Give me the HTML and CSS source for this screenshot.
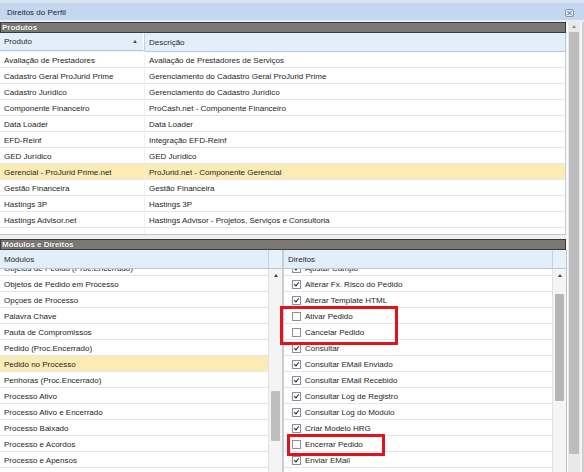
FILE: index.html
```html
<!DOCTYPE html>
<html lang="pt-BR">
<head>
    <meta charset="UTF-8">
    <title>Direitos do Perfil</title>
    <link rel="stylesheet" href="styles.css">
</head>
<body>
    <div class="titlebar">
        <span>Direitos do Perfil</span>
        <svg class="close" width="9" height="8" viewBox="0 0 9 8">
            <rect x="0.5" y="0.5" width="8" height="7" rx="1.5" fill="#dfe8f3" stroke="#8a96a6"/>
            <path d="M2.5 2l4 4M6.5 2l-4 4" stroke="#5d6878" stroke-width="1"/>
        </svg>
    </div>

    <div class="frame">
        <div class="content">
            <!-- Produtos -->
            <div class="section-title">Produtos</div>
            <div class="grid-head">
                <div class="head-cell col-prod">Produto <span class="sort"></span></div>
                <div class="head-cell">Descrição</div>
            </div>
            <div class="grid-body">
                <div class="row"><div class="col-prod">Avaliação de Prestadores</div><div class="cell">Avaliação de Prestadores de Serviços</div></div>
                <div class="row"><div class="col-prod">Cadastro Geral ProJurid Prime</div><div class="cell">Gerenciamento do Cadastro Geral ProJurid Prime</div></div>
                <div class="row"><div class="col-prod">Cadastro Jurídico</div><div class="cell">Gerenciamento do Cadastro Jurídico</div></div>
                <div class="row"><div class="col-prod">Componente Financeiro</div><div class="cell">ProCash.net - Componente Financeiro</div></div>
                <div class="row"><div class="col-prod">Data Loader</div><div class="cell">Data Loader</div></div>
                <div class="row"><div class="col-prod">EFD-Reinf</div><div class="cell">Integração EFD-Reinf</div></div>
                <div class="row"><div class="col-prod">GED Jurídico</div><div class="cell">GED Jurídico</div></div>
                <div class="row selected"><div class="col-prod">Gerencial - ProJurid Prime.net</div><div class="cell">ProJurid.net - Componente Gerencial</div></div>
                <div class="row"><div class="col-prod">Gestão Financeira</div><div class="cell">Gestão Financeira</div></div>
                <div class="row"><div class="col-prod">Hastings 3P</div><div class="cell">Hastings 3P</div></div>
                <div class="row"><div class="col-prod">Hastings Advisor.net</div><div class="cell">Hastings Advisor - Projetos, Serviços e Consultoria</div></div>
                <div class="row"><div class="col-prod">Hastings Mail Tracking</div><div class="cell">Hastings Mail Tracking - Controle de E-mail</div></div>
            </div>

            <!-- Módulos e Direitos -->
            <div class="section-title second">Módulos e Direitos</div>
            <div class="split">
                <div class="pane modules">
                    <div class="pane-head">
                        <div class="head-cell">Módulos</div>
                        <div class="head-corner"></div>
                    </div>
                    <div class="pane-main">
                        <div class="list">
                            <div class="scrolled">
                                <div class="row">Objetos de Pedido (Proc.Encerrado)</div>
                                <div class="row">Objetos de Pedido em Processo</div>
                                <div class="row">Opçoes de Processo</div>
                                <div class="row">Palavra Chave</div>
                                <div class="row">Pauta de Compromissos</div>
                                <div class="row">Pedido (Proc.Encerrado)</div>
                                <div class="row selected">Pedido no Processo</div>
                                <div class="row">Penhoras (Proc.Encerrado)</div>
                                <div class="row">Processo Ativo</div>
                                <div class="row">Processo Ativo e Encerrado</div>
                                <div class="row">Processo Baixado</div>
                                <div class="row">Processo e Acordos</div>
                                <div class="row">Processo e Apensos</div>
                                <div class="row">Processo e Incidentes</div>
                            </div>
                        </div>
                        <div class="vscroll">
                            <div class="arrow"></div>
                            <div class="thumb thumb-modules"></div>
                        </div>
                    </div>
                </div>

                <div class="pane rights">
                    <div class="pane-head">
                        <div class="head-cell">Direitos</div>
                        <div class="head-corner"></div>
                    </div>
                    <div class="pane-main">
                        <div class="list">
                            <div class="scrolled">
                                <div class="row"><span class="cb on"></span>Ajustar Campo</div>
                                <div class="row"><span class="cb on"></span>Alterar Fx. Risco do Pedido</div>
                                <div class="row"><span class="cb on"></span>Alterar Template HTML</div>
                                <div class="row"><span class="cb"></span>Ativar Pedido</div>
                                <div class="row"><span class="cb"></span>Cancelar Pedido</div>
                                <div class="row"><span class="cb on"></span>Consultar</div>
                                <div class="row"><span class="cb on"></span>Consultar EMail Enviado</div>
                                <div class="row"><span class="cb on"></span>Consultar EMail Recebido</div>
                                <div class="row"><span class="cb on"></span>Consultar Log de Registro</div>
                                <div class="row"><span class="cb on"></span>Consultar Log do Módulo</div>
                                <div class="row"><span class="cb on"></span>Criar Modelo HRG</div>
                                <div class="row"><span class="cb"></span>Encerrar Pedido</div>
                                <div class="row"><span class="cb on"></span>Enviar EMail</div>
                                <div class="row"><span class="cb on"></span>Excluir</div>
                            </div>
                        </div>
                        <div class="vscroll">
                            <div class="arrow"></div>
                            <div class="thumb thumb-rights"></div>
                        </div>
                    </div>
                </div>

                <!-- destaques -->
                <div class="mark mark-1"></div>
                <div class="mark mark-2"></div>
            </div>
        </div>

        <div class="outer-scroll">
            <div class="arrow"></div>
            <div class="outer-thumb"></div>
        </div>
        <div class="outer-edge"></div>
    </div>
</body>
</html>
```

FILE: styles.css
```css
body {
    margin: 0;
    width: 584px;
    height: 472px;
    overflow: hidden;
    font-family: "Liberation Sans", Arial, sans-serif;
    font-size: 8px;
    color: #1e1e1e;
    background-color: #f0f0f0;
}

/* Title bar */
.titlebar {
    height: 15px;
    padding: 2px 10px 0 7px;
    border-top: 3px solid #d8e4f2;
    border-bottom: 2px solid #e6edf6;
    background-color: #c4d7ee;
    display: flex;
    align-items: center;
    justify-content: space-between;
    color: #1c2838;
}

.close {
    display: block;
}

.frame {
    display: flex;
    height: 450px;
}

.content {
    width: 567px;
    display: flex;
    flex-direction: column;
}

/* Section headers */
.section-title {
    height: 9px;
    line-height: 10px;
    margin-right: 1px;
    padding-left: 1px;
    background-color: #7b7773;
    border: 1px solid #3c3c3c;
    color: #ffffff;
    font-weight: bold;
    text-shadow: 0 0 1px #2e2e2e;
}

.section-title.second {
    margin-top: 4px;
}

.head-cell {
    height: 18px;
    line-height: 19px;
    padding-left: 4px;
    background-color: #e3eefb;
    border-bottom: 1px solid #b8c8dc;
    color: #2a2a2a;
    flex: 1;
}

/* Produtos grid */
.grid-head {
    display: flex;
    margin-right: 1px;
    border-right: 1px solid #b8c8dc;
}

.grid-head .col-prod {
    flex: none;
    display: flex;
    align-items: center;
    box-sizing: border-box;
    border-right: 1px solid #c2d1e3;
    box-shadow: inset -1px 0 0 #ffffff;
    padding-right: 7px;
}

.sort {
    margin-left: auto;
    width: 0;
    height: 0;
    border-left: 2px solid transparent;
    border-right: 2px solid transparent;
    border-bottom: 3px solid #4c4c4c;
}

.col-prod {
    width: 145px;
    box-sizing: border-box;
}

.grid-body {
    height: 182px;
    overflow: hidden;
    background-color: #ffffff;
    margin-right: 1px;
    border-right: 1px solid #c8d2de;
    border-bottom: 1px solid #c4c4c4;
}

.row {
    height: 13px;
    padding-top: 2px;
    line-height: 13px;
    border-bottom: 1px solid #e3e5e9;
    display: flex;
    align-items: center;
    white-space: nowrap;
}

.grid-body .col-prod {
    padding-left: 4px;
    border-right: 1px solid #edf0f4;
    align-self: stretch;
}

.grid-body .cell {
    padding-left: 4px;
}

.row.selected {
    background-color: #fbecb6;
}

/* Módulos e Direitos */
.split {
    position: relative;
    display: flex;
    flex: 1;
    min-height: 0;
}

.pane {
    display: flex;
    flex-direction: column;
}

.pane.modules {
    width: 282px;
    border-right: 2px solid #c9ced6;
}

.pane.rights {
    width: 282px;
    border-right: 1px solid #b9c2cd;
}

.pane-head {
    display: flex;
}

.head-corner {
    width: 13px;
    height: 18px;
    background-color: #e8f0fa;
    border-bottom: 1px solid #b8c8dc;
    border-left: 1px solid #c2d1e3;
}

.pane-main {
    flex: 1;
    display: flex;
    min-height: 0;
}

.list {
    flex: 1;
    overflow: hidden;
    background-color: #ffffff;
}

.scrolled {
    margin-top: -9px;
}

.modules .row {
    padding-left: 4px;
}

.rights .row {
    padding-left: 8px;
}

.cb {
    position: relative;
    width: 9px;
    height: 9px;
    box-sizing: border-box;
    border: 1px solid #8b9198;
    background-color: #ffffff;
    margin-right: 4px;
    flex: none;
}

.cb.on::after {
    content: "";
    position: absolute;
    left: 2px;
    top: 0;
    width: 2px;
    height: 4px;
    border: solid #1f2a36;
    border-width: 0 1.5px 1.5px 0;
    transform: rotate(40deg);
}

.vscroll {
    width: 13px;
    background-color: #f4f4f4;
    border-left: 1px solid #e2e2e2;
    display: flex;
    flex-direction: column;
    align-items: center;
}

.arrow {
    margin-top: 5px;
    width: 0;
    height: 0;
    border-left: 2px solid transparent;
    border-right: 2px solid transparent;
    border-bottom: 3px solid #444444;
    flex: none;
}

.thumb {
    width: 9px;
    background-color: #bebebe;
    border-radius: 1px;
}

.thumb-modules {
    margin-top: 114px;
    height: 50px;
}

.thumb-rights {
    margin-top: 17px;
    height: 107px;
    background-color: #b6b6b6;
}

/* Outer scrollbar */
.outer-scroll {
    width: 12px;
    background-color: #e9e9e9;
    border-left: 1px solid #ffffff;
    display: flex;
    flex-direction: column;
    align-items: center;
}

.outer-scroll .arrow {
    margin-top: 3px;
    border-bottom-color: #8a8a8a;
}

.outer-thumb {
    margin-top: 4px;
    width: 10px;
    height: 422px;
    background-color: #bdbdbd;
}

.outer-edge {
    flex: 1;
    background-color: #e2e2e2;
    border-left: 2px solid #f4f4f4;
    box-shadow: inset -2px 0 0 #cfcfcf;
}

/* Red highlight boxes */
.mark {
    position: absolute;
    border: 3px solid #e3131b;
}

.mark-1 {
    left: 280px;
    top: 56px;
    width: 112px;
    height: 33px;
}

.mark-2 {
    left: 287px;
    top: 184px;
    width: 92px;
    height: 16px;
}
```
